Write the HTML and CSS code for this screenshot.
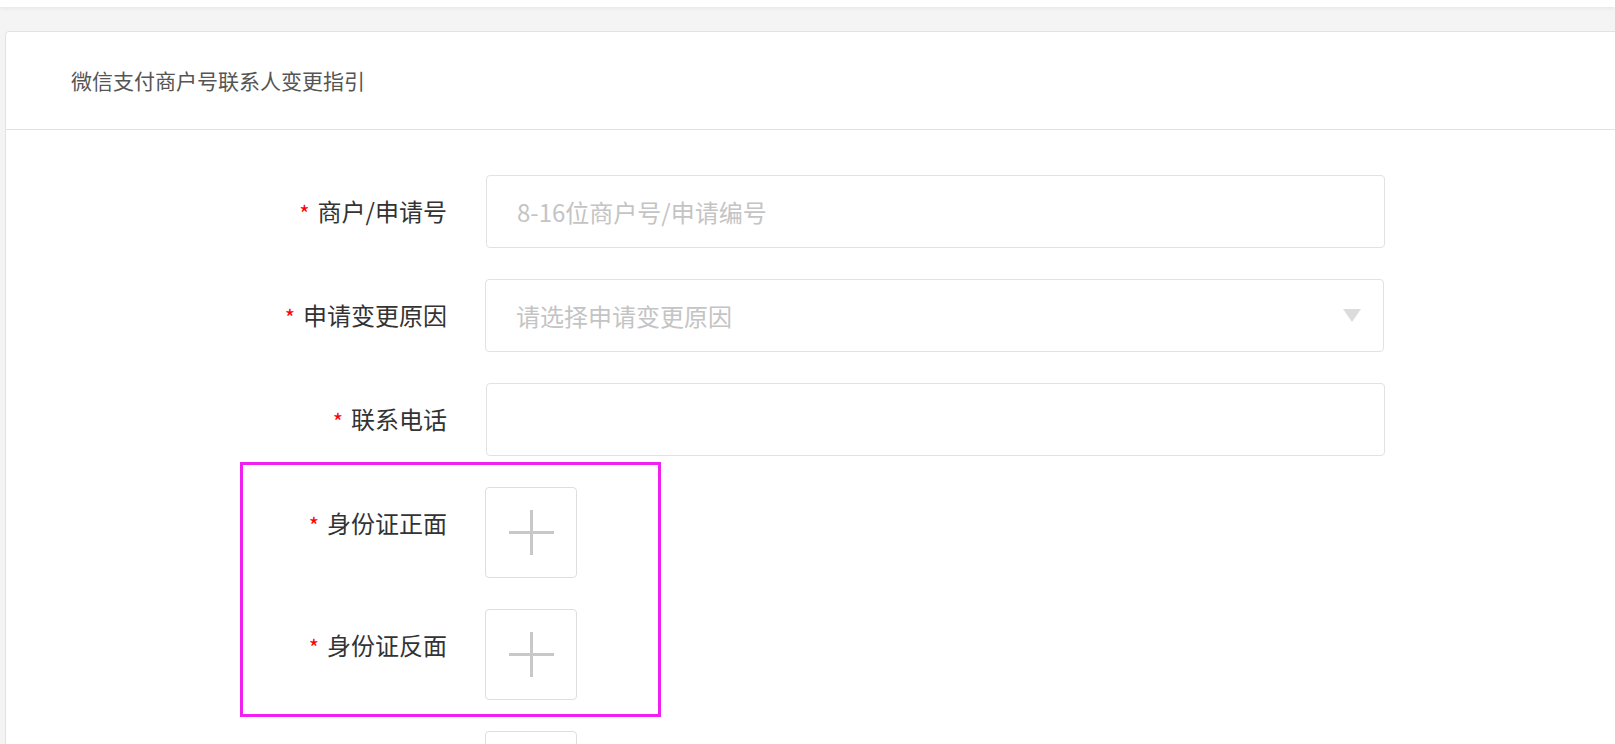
FILE: index.html
```html
<!DOCTYPE html>
<html lang="zh-CN">
<head>
<meta charset="utf-8">
<title>微信支付商户号联系人变更指引</title>
<link rel="stylesheet" href="styles.css">
</head>
<body>
<div class="topbar"></div>
<div class="page">
  <div class="card">
    <div class="card-header">微信支付商户号联系人变更指引</div>
    <form class="form">
      <div class="row">
        <label class="label"><span class="req">*</span>商户/申请号</label>
        <div class="control"><input class="input" type="text" placeholder="8-16位商户号/申请编号"></div>
      </div>
      <div class="row">
        <label class="label"><span class="req">*</span>申请变更原因</label>
        <div class="control">
          <div class="select"><span class="select-ph">请选择申请变更原因</span><span class="caret"></span></div>
        </div>
      </div>
      <div class="row">
        <label class="label"><span class="req">*</span>联系电话</label>
        <div class="control"><input class="input" type="text"></div>
      </div>
      <div class="row">
        <label class="label"><span class="req">*</span>身份证正面</label>
        <div class="control"><div class="upload"><span class="plus"></span></div></div>
      </div>
      <div class="row">
        <label class="label"><span class="req">*</span>身份证反面</label>
        <div class="control"><div class="upload"><span class="plus"></span></div></div>
      </div>
      <div class="row">
        <label class="label"></label>
        <div class="control"><div class="upload"><span class="plus"></span></div></div>
      </div>
    </form>
  </div>
</div>
<div class="highlight"></div>
</body>
</html>
```

FILE: styles.css
```css
html, body {
  margin: 0;
  padding: 0;
}
body {
  background: #f4f4f4;
  font-family: "Noto Sans CJK SC", "Noto Sans", sans-serif;
  overflow: hidden;
  height: 744px;
  position: relative;
}
.topbar {
  height: 7px;
  background: #fff;
  box-shadow: 0 1px 5px rgba(0, 0, 0, 0.07);
  position: relative;
}
.page {
  padding: 24px 0 0 5px;
}
.card {
  width: 1660px;
  background: #fff;
  border: 1px solid #e2e2e2;
  border-radius: 4px;
}
.card-header {
  height: 97px;
  line-height: 96px;
  padding-left: 65px;
  font-size: 21px;
  color: #555;
  border-bottom: 1px solid #e2e2e2;
}
.form {
  padding-top: 45px;
}
.row {
  display: flex;
  align-items: flex-start;
  margin-bottom: 31px;
}
.label {
  box-sizing: border-box;
  width: 441px;
  height: 73px;
  padding-bottom: 3px;
  flex: none;
  display: flex;
  align-items: center;
  justify-content: flex-end;
  font-size: 24px;
  color: #333;
  white-space: nowrap;
}
.req {
  color: #f00;
  font-size: 22px;
  margin-right: 8px;
  position: relative;
  top: 2px;
}
.control {
  margin-left: 39px;
}
.input, .select {
  box-sizing: border-box;
  width: 899px;
  height: 73px;
  border: 1px solid #e2e2e2;
  border-radius: 4px;
  padding: 0 30px;
  font-family: inherit;
  font-size: 24px;
  color: #333;
  background: #fff;
  outline: none;
  display: block;
  margin: 0;
}
.input::placeholder {
  color: #c4c4c4;
}
.select {
  display: flex;
  align-items: center;
  justify-content: space-between;
  margin-left: -1px;
  padding-right: 22px;
}
.select-ph {
  color: #c4c4c4;
}
.caret {
  width: 0;
  height: 0;
  border-left: 9px solid transparent;
  border-right: 9px solid transparent;
  border-top: 13px solid #dcdcdc;
}
.upload {
  box-sizing: border-box;
  width: 92px;
  height: 91px;
  margin-left: -1px;
  border: 1px solid #dedede;
  border-radius: 4px;
  display: flex;
  align-items: center;
  justify-content: center;
  background: #fff;
}
.plus {
  width: 45px;
  height: 45px;
  position: relative;
}
.plus::before, .plus::after {
  content: "";
  position: absolute;
  background: #c8c8c8;
}
.plus::before {
  left: 0;
  right: 0;
  top: 21px;
  height: 3px;
}
.plus::after {
  top: 0;
  bottom: 0;
  left: 21px;
  width: 3px;
}
.highlight {
  position: absolute;
  left: 240px;
  top: 462px;
  width: 415px;
  height: 249px;
  border: 3px solid #f020f0;
  pointer-events: none;
}
```
